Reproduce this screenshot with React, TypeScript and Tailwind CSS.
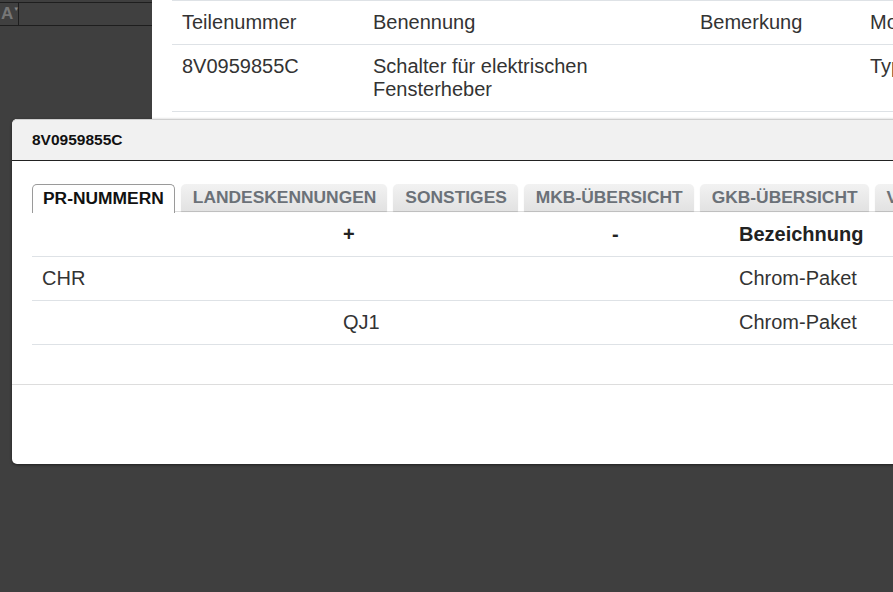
import React from 'react';

const font = { fontFamily: '"Liberation Sans", Arial, sans-serif' };

const tabs = ['PR-NUMMERN', 'LANDESKENNUNGEN', 'SONSTIGES', 'MKB-ÜBERSICHT', 'GKB-ÜBERSICHT', 'VERWENDUNG'];

const prRows = [
  { pr: 'CHR', plus: '', minus: '', name: 'Chrom-Paket' },
  { pr: '', plus: 'QJ1', minus: '', name: 'Chrom-Paket' },
];

export default function App() {
  return (
    <div
      style={font}
      className="relative w-[893px] h-[592px] overflow-hidden bg-[#3f3f3f] flex"
    >
      {/* Sidebar */}
      <div className="w-[152px] shrink-0 flex flex-col">
        <div className="mt-[2px] h-[24px] border-t border-b border-[#1e1e1e] bg-[#404040] flex">
          <div className="w-[19px] border-r border-[#1e1e1e] flex items-start pl-[1px]">
            <span className="text-[17px] font-bold leading-[22px] text-[#777]">A</span>
            <span className="text-[6px] leading-[12px] text-[#888]">▼</span>
          </div>
        </div>
      </div>

      {/* Page content */}
      <div className="flex-1 flex flex-col">
        <div className="h-[119px] bg-white pl-[20px]">
          <div className="border-t border-[#dee2e6] text-[20px] leading-[23px] text-[#333]">
            <div className="flex border-b border-[#dee2e6]">
              <div className="w-[191px] px-[10px] py-[10px]">Teilenummer</div>
              <div className="w-[327px] px-[10px] py-[10px]">Benennung</div>
              <div className="w-[170px] px-[10px] py-[10px]">Bemerkung</div>
              <div className="flex-1 px-[10px] py-[10px] whitespace-nowrap">Modell</div>
            </div>
            <div className="flex border-b border-[#dee2e6]">
              <div className="w-[191px] px-[10px] py-[10px]">8V0959855C</div>
              <div className="w-[327px] px-[10px] py-[10px]">
                Schalter für elektrischen
                <br />
                Fensterheber
              </div>
              <div className="w-[170px] px-[10px] py-[10px]"></div>
              <div className="flex-1 px-[10px] py-[10px] whitespace-nowrap">Typ</div>
            </div>
          </div>
        </div>
        <div className="flex-1 flex justify-end">
          <div className="w-[31px] flex flex-col pt-[372px] bg-[#3b3b3b]">
            <div className="h-[44px] border-t border-[#2a2a2a]" />
            <div className="flex-1 border-t border-[#2a2a2a]" />
          </div>
        </div>
      </div>

      {/* Modal */}
      <div className="absolute left-[12px] top-[119px] w-[920px] h-[345px] bg-white rounded-l-[5px] shadow-[0_1px_3px_rgba(0,0,0,0.5)] flex flex-col overflow-hidden">
        <div className="h-[42px] bg-[#f1f1f1] border-t border-[#cfcfcf] border-b border-b-[#222] flex items-center pl-[20px] rounded-tl-[5px]">
          <span className="text-[15.5px] font-bold text-[#111]">8V0959855C</span>
        </div>

        <div className="pt-[23px] pl-[20px] h-[224px] border-b border-[#dddddd]">
          {/* Tabs */}
          <div className="flex gap-[6px] border-b border-[#dddddd] h-[28px] whitespace-nowrap">
            {tabs.map((t, i) =>
              i === 0 ? (
                <div
                  key={t}
                  className="h-[29px] px-[10px] bg-white border border-b-0 border-[#9a9a9a] rounded-t-[5px] text-[17.4px] font-bold leading-[27px] text-[#111]"
                >
                  {t}
                </div>
              ) : (
                <div
                  key={t}
                  className="h-[27px] pl-[12px] pr-[11px] bg-gradient-to-b from-[#f2f2f2] to-[#e2e2e2] rounded-t-[5px] shadow-[0_1px_1px_rgba(0,0,0,0.15)] text-[17.4px] font-bold leading-[27px] text-[#6b7178]"
                >
                  {t}
                </div>
              )
            )}
          </div>

          {/* PR table */}
          <div className="mt-[1px] text-[20px] leading-[23px] text-[#333]">
            <div className="flex border-b border-[#dee2e6] font-bold text-[#222]">
              <div className="w-[301px] px-[10px] py-[10px]">&nbsp;</div>
              <div className="w-[269px] px-[10px] py-[10px]">+</div>
              <div className="w-[127px] px-[10px] py-[10px]">-</div>
              <div className="flex-1 px-[10px] py-[10px]">Bezeichnung</div>
            </div>
            {prRows.map((r, i) => (
              <div key={i} className="flex border-b border-[#dee2e6]">
                <div className="w-[301px] px-[10px] py-[10px]">{r.pr || '\u00a0'}</div>
                <div className="w-[269px] px-[10px] py-[10px]">{r.plus}</div>
                <div className="w-[127px] px-[10px] py-[10px]">{r.minus}</div>
                <div className="flex-1 px-[10px] py-[10px]">{r.name}</div>
              </div>
            ))}
          </div>
        </div>

        <div className="flex-1" />
      </div>
    </div>
  );
}
